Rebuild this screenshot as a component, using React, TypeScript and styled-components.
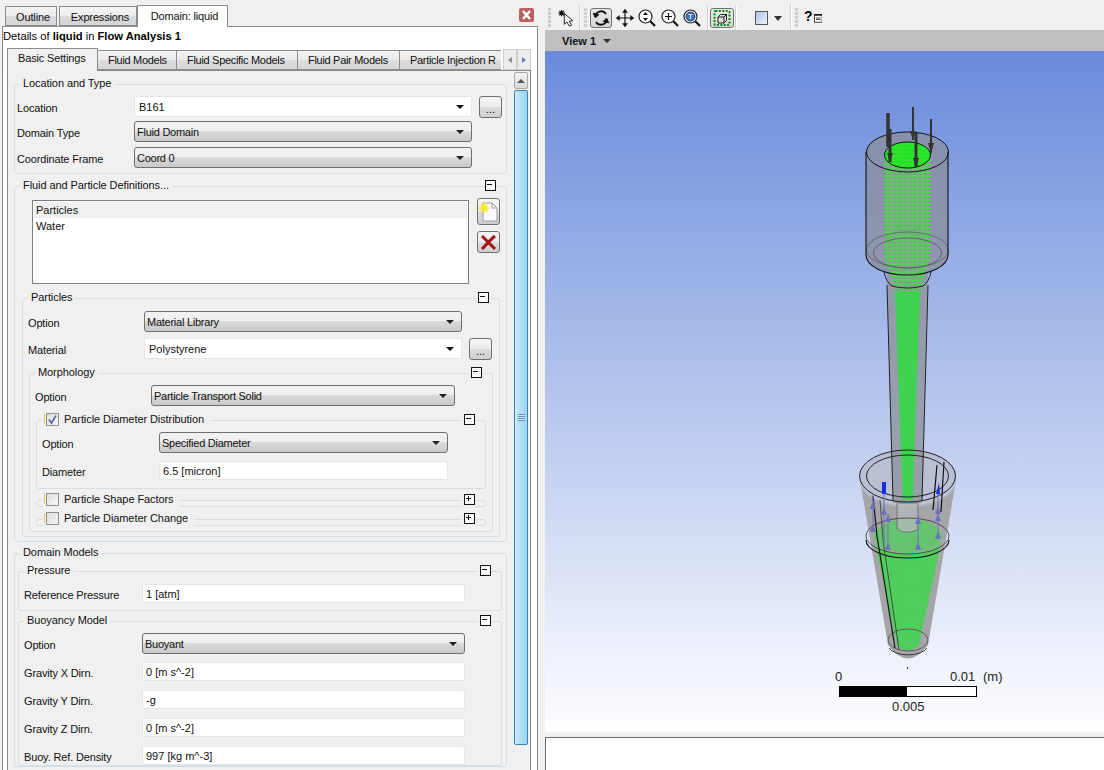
import React from "react";
import styled, { createGlobalStyle } from "styled-components";

const Global = createGlobalStyle`
  html, body { margin: 0; padding: 0; background: #f0f0f0; }
  body { font-family: "Liberation Sans", Arial, sans-serif; font-size: 11px; color: #000; }
  * { box-sizing: border-box; }
`;

const Root = styled.div`
  width: 1104px; height: 770px; display: flex; overflow: hidden; background: #f0f0f0;
`;
const LeftPane = styled.div`
  width: 545px; height: 100%; flex: none; display: flex; flex-direction: column; padding: 0 7px 0 2px;
`;
const TopTabs = styled.div`
  height: 26px; flex: none; display: flex; align-items: flex-end; padding-left: 3px; position: relative; z-index: 2;
`;
const TopTab = styled.div<{ $w: number; $active?: boolean; $gap?: number }>`
  width: ${p => p.$w}px;
  height: ${p => (p.$active ? 22 : 20)}px;
  margin-right: ${p => p.$gap ?? 0}px;
  margin-bottom: ${p => (p.$active ? -1 : 0)}px;
  padding: ${p => (p.$active ? "0 0 1px 4px" : "1px 0 0 4px")};
  border: 1px solid #8c8c8c;
  border-bottom: ${p => (p.$active ? "none" : "1px solid #8c8c8c")};
  background: ${p => (p.$active ? "#fff" : "linear-gradient(#f3f3f3 0, #ececec 50%, #dcdcdc 51%, #d4d4d4 100%)")};
  display: flex; align-items: center; justify-content: center; color: #111; letter-spacing: -0.15px;
`;
const CloseBtn = styled.div`
  width: 15px; height: 14px; margin: 0 4px 4px auto; border-radius: 2px; background: #bb5f5f;
  display: flex; align-items: center; justify-content: center;
`;
const Frame = styled.div`
  flex: 1; min-height: 0; border: 1px solid #8a8a8a; border-bottom: none; background: #fff; display: flex; flex-direction: column;
`;
const DetailsTitle = styled.div`
  height: 21px; flex: none; padding: 2px 0 0; line-height: 14px; font-size: 11.2px;
  b { font-weight: 700; }
`;
const SubTabs = styled.div`
  height: 22px; flex: none; margin: 0 6px 0 4px; display: flex; align-items: flex-end; position: relative; z-index: 2;
`;
const SubTab = styled.div<{ $w: number; $active?: boolean; $open?: boolean }>`
  width: ${p => p.$w}px; flex: none; overflow: hidden; white-space: nowrap;
  height: ${p => (p.$active ? 23 : 20)}px;
  margin-bottom: ${p => (p.$active ? -1 : 0)}px;
  border: 1px solid #8c8c8c;
  border-left: ${p => (p.$active ? "1px solid #8c8c8c" : "none")};
  border-right: ${p => (p.$open ? "none" : "1px solid #8c8c8c")};
  border-bottom: ${p => (p.$active ? "none" : "1px solid #8c8c8c")};
  background: ${p => (p.$active ? "#f0f0f0" : "linear-gradient(#f2f2f2 0, #ebebeb 50%, #dddddd 51%, #d6d6d6 100%)")};
  padding-left: 10px;
  line-height: 18px; color: #111; letter-spacing: ${p => (p.$active ? -0.15 : -0.3)}px;
`;
const TabScroll = styled.div`
  flex: none; margin-left: 2px; display: flex; height: 21px;
`;
const TabScrollBtn = styled.div`
  width: 14px; height: 21px; border: 1px solid #cfcfcf; background: #ececec; display: flex; align-items: center; justify-content: center;
`;
const Tri = styled.span<{ $dir: "l" | "r"; $c: string }>`
  width: 0; height: 0; border-top: 3px solid transparent; border-bottom: 3px solid transparent;
  ${p => (p.$dir === "l" ? `border-right: 4px solid ${p.$c};` : `border-left: 4px solid ${p.$c};`)}
`;
const Body = styled.div`
  flex: 1; min-height: 0; margin: 0 6px 0 4px; border: 1px solid #8a8a8a; border-bottom: none; background: #f0f0f0; display: flex; overflow: hidden;
`;
const Content = styled.div`
  width: 505px; flex: none; padding: 13px 6px 0;
`;
const Scrollbar = styled.div`
  width: 17px; flex: none; padding: 1px 2px 0 1px; display: flex; flex-direction: column;
`;
const ScrollUp = styled.div`
  height: 17px; border: 1px solid #a8a8a8; border-radius: 2px; background: linear-gradient(#f4f4f4, #d8d8d8);
  display: flex; align-items: center; justify-content: center;
  &::before { content: ""; border-left: 4px solid transparent; border-right: 4px solid transparent; border-bottom: 4px solid #555; }
`;
const Thumb = styled.div`
  height: 655px; margin-top: 1px; border: 1px solid #3c7fb1; border-radius: 2px;
  background: linear-gradient(90deg, #cfeafb 0, #b5e0f8 40%, #9dd4f3 100%);
  display: flex; align-items: center; justify-content: center;
`;
const Grip = styled.div`
  width: 7px; height: 7px;
  background: repeating-linear-gradient(#5b93bd 0 1px, #cde9fa 1px 2px);
`;

const Group = styled.div<{ $ml?: number; $mr?: number; $mt?: number; $pb?: number }>`
  margin: ${p => p.$mt ?? 0}px ${p => p.$mr ?? 0}px 0 ${p => p.$ml ?? 0}px;
  padding-bottom: ${p => p.$pb ?? 0}px;
  border: 1px solid #d5dfe5; border-radius: 3px;
`;
const GroupHead = styled.div<{ $pt?: number; $collapsed?: boolean }>`
  height: 14px; margin-top: -8px; margin-bottom: ${p => (p.$collapsed ? -1 : p.$pt ?? 5)}px;
  display: flex; align-items: center; justify-content: space-between; padding: 0 10px 0 5px;
`;
const Legend = styled.div`
  background: #f0f0f0; padding: 0 3px 2px; display: flex; align-items: center; height: 14px; line-height: 12px;
  color: #111; font-size: 11px; white-space: nowrap; letter-spacing: -0.08px;
`;
const CheckLegend = styled(Legend)`
  margin-left: 1px; padding: 0 6px 2px 1px;
`;
const Tick = styled.span`
  width: 1px; height: 10px; background: #f0c36d; margin-right: 1px;
`;
const CheckBox = styled.span`
  width: 13px; height: 13px; margin-right: 5px; border: 1px solid #8e8f8f; background: linear-gradient(135deg, #dedede, #f6f6f6);
  display: inline-flex; align-items: center; justify-content: center;
`;
const Toggle = styled.span`
  width: 13px; height: 13px; padding: 1px 2px 1px 0; background: #f0f0f0; display: block; position: relative;
  &::before { content: ""; display: block; width: 9px; height: 9px; margin: -1px 0 0 2px; border: 1px solid #111; background: #f8f8f8; }
  &::after { content: ""; position: absolute; left: 4px; top: 4px; width: 5px; height: 1px; background: #111; }
`;
const PlusBar = styled.span`
  position: absolute; left: 6px; top: 2px; width: 1px; height: 5px; background: #111;
`;
const Row = styled.div<{ $pad: number; $mt?: number }>`
  display: flex; align-items: center; height: 21px; padding-left: ${p => p.$pad}px; margin-top: ${p => p.$mt ?? 0}px;
`;
const Label = styled.div<{ $w: number }>`
  width: ${p => p.$w}px; flex: none; color: #111; padding-top: 3px; letter-spacing: -0.15px;
`;
const Select = styled.div<{ $w: number }>`
  width: ${p => p.$w}px; height: 21px; flex: none; border: 1px solid #6f6f6f; border-radius: 3px; padding: 0 0 0 2px;
  background: linear-gradient(#f2f2f2 0, #efefef 45%, #dcdcdc 46%, #c9c9c9 100%);
  display: flex; align-items: center; justify-content: space-between; color: #111; letter-spacing: -0.25px;
  &::after { content: ""; margin: 1px 7px 0 0; border-left: 4px solid transparent; border-right: 4px solid transparent; border-top: 4px solid #222; }
`;
const Combo = styled.div<{ $w: number }>`
  width: ${p => p.$w}px; height: 21px; flex: none; border: 1px solid #e6e6e6; border-radius: 2px; background: #fff; padding: 0 0 0 4px;
  display: flex; align-items: center; justify-content: space-between; color: #111;
  &::after { content: ""; margin: 0 7px 0 0; border-left: 4px solid transparent; border-right: 4px solid transparent; border-top: 4px solid #111; }
`;
const Input = styled.div<{ $w: number }>`
  width: ${p => p.$w}px; height: 19px; flex: none; border: 1px solid #e6e6e6; border-radius: 2px; background: #fff; padding: 0 0 0 3px;
  display: flex; align-items: center; color: #111;
`;
const InputRow = styled(Row)`
  height: 19px;
`;
const DotsBtn = styled.div`
  width: 23px; height: 22px; flex: none; margin-left: 7px; border: 1px solid #707070; border-radius: 3px;
  background: linear-gradient(#f4f4f4 0, #ececec 50%, #dcdcdc 51%, #cfcfcf 100%);
  display: flex; align-items: flex-end; justify-content: center; line-height: 14px; padding-bottom: 1px;
`;
const ListRow = styled.div`
  display: flex; align-items: flex-start; margin-left: 17px; height: 86px;
`;
const List = styled.div`
  width: 437px; height: 84px; flex: none; margin-top: 2px; border: 1px solid #7b7f85; background: #fff; padding: 1px;
`;
const ListItem = styled.div<{ $sel?: boolean }>`
  height: 16px; line-height: 16px; padding-left: 2px; color: #111; background: ${p => (p.$sel ? "#f0f0f0" : "transparent")};
`;
const SideBtns = styled.div`
  display: flex; flex-direction: column; gap: 6px; margin-left: 8px;
`;
const SideBtn = styled.div<{ $h: number }>`
  width: 23px; height: ${p => p.$h}px; border: 1px solid #707070; border-radius: 3px;
  background: linear-gradient(#f4f4f4 0, #ececec 50%, #dcdcdc 51%, #cfcfcf 100%);
  display: flex; align-items: center; justify-content: center;
`;
const RightPane = styled.div`
  flex: 1; min-width: 0; height: 100%; display: flex; flex-direction: column;
`;
const Toolbar = styled.div`
  height: 30px; flex: none; padding-top: 5px; display: flex; align-items: flex-start;
`;
const TGrip = styled.span<{ $ml: number }>`
  width: 3px; height: 19px; margin: 3px 0 0 ${p => p.$ml}px; flex: none;
  background: repeating-linear-gradient(#cfcfcf 0 3px, transparent 3px 4px);
`;
const TSep = styled.span<{ $ml: number }>`
  width: 2px; height: 25px; margin-left: ${p => p.$ml}px; flex: none; border-left: 1px solid #d0d0d0; border-right: 1px solid #fff;
`;
const ToolBtn = styled.div<{ $w: number; $ml?: number; $on?: boolean }>`
  width: ${p => p.$w}px; height: 20px; margin: 3px 0 0 ${p => p.$ml ?? 0}px; flex: none; border-radius: 3px;
  border: 1px solid ${p => (p.$on ? "#707070" : "transparent")};
  background: ${p => (p.$on ? "linear-gradient(#e9e9e9, #d6d6d6)" : "transparent")};
  display: flex; align-items: center; justify-content: center; gap: 6px;
`;
const HelpMark = styled.span`
  font-weight: 700; font-size: 14px; line-height: 14px; margin: -4px -5px 0 0;
`;
const ViewBar = styled.div`
  height: 21px; flex: none; background: #bfbfbf; padding-left: 17px; display: flex; align-items: center; gap: 7px; font-weight: 700; color: #101018;
  &::after { content: ""; margin-top: 1px; border-left: 4px solid transparent; border-right: 4px solid transparent; border-top: 4px solid #333; }
`;
const Viewport = styled.div`
  height: 681px; flex: none; background: linear-gradient(#6a8adb 0, #fefeff 100%);
`;
const ViewSvg = styled.svg`
  display: block; width: 100%; height: 100%;
`;
const BottomPanel = styled.div`
  flex: 1; margin-top: 5px; background: #fff; border-top: 1px solid #6f6f6f; border-left: 1px solid #6f6f6f;
`;

const Head: React.FC<{ title: string; pt?: number; none?: boolean }> = ({ title, pt, none }) => (
  <GroupHead $pt={pt}>
    <Legend>{title}</Legend>
    {!none && <Toggle />}
  </GroupHead>
);

const Check = ({ on }: { on?: boolean }) => (
  <CheckBox>
    {on && (
      <svg width="11" height="11" viewBox="0 0 11 11">
        <path d="M2 5.5 L4.5 9 L9 1.5" fill="none" stroke="#5a6fa8" strokeWidth="1.8" />
      </svg>
    )}
  </CheckBox>
);

const CheckHead: React.FC<{ title: string; on?: boolean; plus?: boolean; pt?: number; collapsed?: boolean }> = ({ title, on, plus, pt, collapsed }) => (
  <GroupHead $pt={pt} $collapsed={collapsed}>
    <CheckLegend>
      <Tick />
      <Check on={on} />
      {title}
    </CheckLegend>
    <Toggle>{plus && <PlusBar />}</Toggle>
  </GroupHead>
);

const Lens: React.FC<{ children?: React.ReactNode }> = ({ children }) => (
  <svg width="20" height="20" viewBox="0 0 20 20" fill="none">
    <circle cx="8.5" cy="8.5" r="6.5" stroke="#222" strokeWidth="1.2" fill="#fff" />
    <path d="M13.3 13.3 L18 18" stroke="#111" strokeWidth="2.2" />
    {children}
  </svg>
);

const Scene = () => {
  const arrows: [number, number, number, number[]][] = [
    [873, 495, 530, [505, 528]],
    [884, 490, 545, [511]],
    [888, 515, 549, [518, 546]],
    [918, 515, 549, [520, 546]],
    [938, 490, 535, [510, 517, 535]],
  ];
  return (
    <ViewSvg viewBox="545 51 559 681" preserveAspectRatio="none">
      <defs>
        <pattern id="mesh" width="5" height="4" patternUnits="userSpaceOnUse">
          <path d="M0 0 L2.5 1 L5 0 M2.5 1 L2.5 3 L0 4 M2.5 3 L5 4" fill="none" stroke="#3fe23f" strokeWidth="1" />
        </pattern>
        <pattern id="dots" width="3" height="3" patternUnits="userSpaceOnUse">
          <rect width="3" height="3" fill="#4ad058" />
          <rect x="1" y="1" width="1" height="1" fill="#74bb7c" />
        </pattern>
      </defs>
      {/* lower cone, behind the tube */}
      <path d="M860 480 L888 645 Q908 672 928 645 L956 480 A48 26 0 0 1 860 480Z" fill="#a5a5a8" />
      <path d="M860 476 A48 26 0 0 1 956 476 L956 482 A48 26 0 0 1 860 482Z" fill="#b0b4c2" fillOpacity="0.6" />
      {/* upper body */}
      <path d="M866 152 L866 255 A41 20 0 0 0 948 255 L948 152 A41 19 0 0 0 866 152Z" fill="#8a8d99" fillOpacity="0.72" />
      <path d="M887 272 L893 503 L922 503 L928 272Z" fill="#8f939e" fillOpacity="0.8" />
      <path d="M884 155 L884 258 Q890 270 896 296 L920 296 Q925 270 931 258 L931 155Z" fill="#8f939e" />
      <path d="M884 155 L884 258 Q890 270 896 296 L920 296 Q925 270 931 258 L931 155Z" fill="url(#mesh)" />
      <path d="M895 292 L900 430 L903 500 L913 500 L915 430 L920 292Z" fill="#3fd24f" />
      <ellipse cx="907.5" cy="155" rx="23" ry="13" fill="#1ee31e" />
      <ellipse cx="907.5" cy="155" rx="23" ry="13" fill="url(#mesh)" opacity="0.7" />
      <ellipse cx="907.5" cy="155" rx="23" ry="13" fill="none" stroke="#111" strokeWidth="1" />
      <ellipse cx="907.5" cy="152" rx="41" ry="20" fill="none" stroke="#111" strokeWidth="1" />
      <ellipse cx="907.5" cy="250" rx="41" ry="18" fill="none" stroke="#5d5f66" strokeWidth="0.8" />
      <ellipse cx="907.5" cy="253" rx="34" ry="15" fill="none" stroke="#55575e" strokeWidth="0.8" />
      <path d="M866 152 L866 255 A41 20 0 0 0 948 255 L948 152" fill="none" stroke="#111" strokeWidth="1.1" />
      <path d="M884 272 Q886 282 892 286 A22 7 0 0 0 923 286 Q929 282 931 272" fill="none" stroke="#222" strokeWidth="1" />
      <path d="M887 285 L893 500 M928 285 L922 500" stroke="#222" strokeWidth="1" />
      {/* top arrows */}
      <g stroke="#333" fill="none">
        <path d="M888 113 L888 147" strokeWidth="3.5" />
        <path d="M890 129 L890 162" strokeWidth="3" />
        <path d="M913 107 L913 140" strokeWidth="2" />
        <path d="M916 133 L916 167" strokeWidth="3" />
        <path d="M931 119 L931 153" strokeWidth="2" />
      </g>
      <g fill="#333">
        <path d="M910 131 L916 131 L913 140Z" />
        <path d="M913 158 L919 158 L916 168Z" />
        <path d="M928 143 L934 143 L931 154Z" />
        <path d="M887 153 L893 153 L890 163Z" />
      </g>
      {/* green cone and inner pipe */}
      <path d="M875 542 L897 645 Q908 656 919 645 L942 538 A34 16 0 0 1 875 542Z" fill="url(#dots)" />
      <ellipse cx="908" cy="536" rx="34" ry="17" fill="url(#dots)" opacity="0.75" />
      <path d="M897 503 L897 528 A11 6 0 0 0 918 528 L918 503Z" fill="#b3b6ba" fillOpacity="0.8" stroke="#666" strokeWidth="0.8" />
      <ellipse cx="907.5" cy="476" rx="48" ry="26" fill="none" stroke="#222" strokeWidth="1" />
      <ellipse cx="907.5" cy="476" rx="41" ry="21" fill="none" stroke="#222" strokeWidth="1" />
      <ellipse cx="907.5" cy="536" rx="41.5" ry="18" fill="none" stroke="#444" strokeWidth="0.9" />
      <path d="M866 540 A41.5 18 0 0 0 949 540" fill="none" stroke="#111" strokeWidth="1.1" />
      <ellipse cx="908" cy="640" rx="20" ry="11" fill="none" stroke="#555" strokeWidth="0.9" />
      <path d="M889 648 A20 10 0 0 0 927 648" fill="none" stroke="#333" strokeWidth="1" />
      <g stroke="#111" fill="none" strokeWidth="1.2">
        <path d="M873 496 L877 536 L895 648" />
        <path d="M880 500 L883 540 L899 650" strokeWidth="0.8" stroke="#333" />
        <path d="M937 465 L933 510" />
        <path d="M944 462 L941 512" />
      </g>
      {arrows.map(([x, a, b, heads]) => (
        <g key={x}>
          <path d={`M${x} ${a} L${x} ${b}`} stroke="#6d72bd" strokeWidth="1" />
          {heads.map(h => (
            <path key={h} d={`M${x - 3} ${h + 4} L${x + 3} ${h + 4} L${x} ${h - 4}Z`} fill="#6d72bd" />
          ))}
        </g>
      ))}
      <rect x="882" y="482" width="4" height="12" fill="#1c2ce0" />
      <path d="M936 494 L940 494 L939 483Z" fill="#1c2ce0" />
      <rect x="907" y="667" width="1" height="2" fill="#333" />
      {/* scale */}
      <rect x="839.5" y="686.5" width="137" height="10" fill="#fff" stroke="#000" />
      <rect x="839" y="686" width="68" height="11" fill="#000" />
      <g fontFamily="'Liberation Sans', Arial, sans-serif" fontSize="13" fill="#222">
        <text x="835" y="681">0</text>
        <text x="950" y="681">0.01</text>
        <text x="983" y="681">(m)</text>
        <text x="892" y="711">0.005</text>
      </g>
    </ViewSvg>
  );
};

export default function App() {
  return (
    <Root>
      <Global />
      <LeftPane>
        <TopTabs>
          <TopTab $w={52} $gap={2}>Outline</TopTab>
          <TopTab $w={78}>Expressions</TopTab>
          <TopTab $w={91} $active>Domain: liquid</TopTab>
          <CloseBtn>
            <svg width="11" height="10" viewBox="0 0 11 10">
              <path d="M2 1 L9 9 M9 1 L2 9" stroke="#fff" strokeWidth="2.4" />
            </svg>
          </CloseBtn>
        </TopTabs>
        <Frame>
          <DetailsTitle>Details of <b>liquid</b> in <b>Flow Analysis 1</b></DetailsTitle>
          <SubTabs>
            <SubTab $w={91} $active>Basic Settings</SubTab>
            <SubTab $w={79}>Fluid Models</SubTab>
            <SubTab $w={121}>Fluid Specific Models</SubTab>
            <SubTab $w={102}>Fluid Pair Models</SubTab>
            <SubTab $w={101} $open>Particle Injection R</SubTab>
            <TabScroll>
              <TabScrollBtn><Tri $dir="l" $c="#8a8a8a" /></TabScrollBtn>
              <TabScrollBtn><Tri $dir="r" $c="#5f78c8" /></TabScrollBtn>
            </TabScroll>
          </SubTabs>
          <Body>
            <Content>
              <Group $pb={5}>
                <Head title="Location and Type" none />
                <Row $pad={2}>
                  <Label $w={117}>Location</Label>
                  <Combo $w={338}>B161</Combo>
                  <DotsBtn>...</DotsBtn>
                </Row>
                <Row $pad={2} $mt={4}>
                  <Label $w={117}>Domain Type</Label>
                  <Select $w={338}>Fluid Domain</Select>
                </Row>
                <Row $pad={2} $mt={5}>
                  <Label $w={117}>Coordinate Frame</Label>
                  <Select $w={338}>Coord 0</Select>
                </Row>
              </Group>

              <Group $mt={12} $pb={4}>
                <Head title="Fluid and Particle Definitions..." />
                <ListRow>
                  <List>
                    <ListItem $sel>Particles</ListItem>
                    <ListItem>Water</ListItem>
                  </List>
                  <SideBtns>
                    <SideBtn $h={27}>
                      <svg width="21" height="23" viewBox="0 0 21 23">
                        <path d="M5 3 L14 3 L19 8 L19 21 L5 21Z" fill="#fbfbff" stroke="#9a9a9a" />
                        <path d="M14 3 L14 8 L19 8" fill="none" stroke="#9a9a9a" />
                        <circle cx="6" cy="8" r="3.4" fill="#f7ef3a" />
                        <path d="M6 2 V14 M0 8 H12 M2 4 L10 12 M10 4 L2 12" stroke="#f2e22a" strokeWidth="1" />
                      </svg>
                    </SideBtn>
                    <SideBtn $h={22}>
                      <svg width="17" height="17" viewBox="0 0 17 17">
                        <path d="M2 2 C6 6 11 11 15 15 M15 2 C10 6 6 11 2 15" fill="none" stroke="#a31417" strokeWidth="3" />
                      </svg>
                    </SideBtn>
                  </SideBtns>
                </ListRow>

                <Group $ml={7} $mr={6} $mt={14} $pb={4}>
                  <Head title="Particles" pt={6} />
                  <Row $pad={5}>
                    <Label $w={116}>Option</Label>
                    <Select $w={318}>Material Library</Select>
                  </Row>
                  <Row $pad={5} $mt={6}>
                    <Label $w={116}>Material</Label>
                    <Combo $w={318}>Polystyrene</Combo>
                    <DotsBtn>...</DotsBtn>
                  </Row>

                  <Group $ml={6} $mr={6} $mt={14} $pb={5}>
                    <Head title="Morphology" pt={5} />
                    <Row $pad={5}>
                      <Label $w={116}>Option</Label>
                      <Select $w={304}>Particle Transport Solid</Select>
                    </Row>
                    <Group $ml={6} $mr={6} $mt={14} $pb={8}>
                      <CheckHead title="Particle Diameter Distribution" on pt={5} />
                      <Row $pad={5}>
                        <Label $w={117}>Option</Label>
                        <Select $w={289}>Specified Diameter</Select>
                      </Row>
                      <InputRow $pad={5} $mt={8}>
                        <Label $w={117}>Diameter</Label>
                        <Input $w={289}>6.5 [micron]</Input>
                      </InputRow>
                    </Group>
                    <Group $ml={6} $mr={6} $mt={11}>
                      <CheckHead title="Particle Shape Factors" plus collapsed />
                    </Group>
                    <Group $ml={6} $mr={6} $mt={12}>
                      <CheckHead title="Particle Diameter Change" plus collapsed />
                    </Group>
                  </Group>
                </Group>
              </Group>

              <Group $mt={11}>
                <Head title="Domain Models" none pt={0} />
                <Group $ml={3} $mr={4} $mt={11} $pb={7}>
                  <Head title="Pressure" pt={6} />
                  <InputRow $pad={5}>
                    <Label $w={118}>Reference Pressure</Label>
                    <Input $w={323}>1 [atm]</Input>
                  </InputRow>
                </Group>
                <Group $ml={3} $mr={4} $mt={10}>
                  <Head title="Buoyancy Model" pt={5} />
                  <Row $pad={5}>
                    <Label $w={118}>Option</Label>
                    <Select $w={323}>Buoyant</Select>
                  </Row>
                  <InputRow $pad={5} $mt={8}>
                    <Label $w={118}>Gravity X Dirn.</Label>
                    <Input $w={323}>0 [m s^-2]</Input>
                  </InputRow>
                  <InputRow $pad={5} $mt={9}>
                    <Label $w={118}>Gravity Y Dirn.</Label>
                    <Input $w={323}>-g</Input>
                  </InputRow>
                  <InputRow $pad={5} $mt={9}>
                    <Label $w={118}>Gravity Z Dirn.</Label>
                    <Input $w={323}>0 [m s^-2]</Input>
                  </InputRow>
                  <InputRow $pad={5} $mt={9}>
                    <Label $w={118}>Buoy. Ref. Density</Label>
                    <Input $w={323}>997 [kg m^-3]</Input>
                  </InputRow>
                </Group>
              </Group>
            </Content>
            <Scrollbar>
              <ScrollUp />
              <Thumb><Grip /></Thumb>
            </Scrollbar>
          </Body>
        </Frame>
      </LeftPane>

      <RightPane>
        <Toolbar>
          <TGrip $ml={3} />
          <ToolBtn $w={20} $ml={6}>
            <svg width="20" height="20" viewBox="0 0 20 20" fill="none">
              <path d="M7 5 L7 17 L10 14.5 L12.5 19 L15 18 L12.5 13.5 L16.5 13Z" fill="#fff" stroke="#111" />
              <path d="M4 1 V8 M0.5 4.5 H7.5 M1.5 2 L6.5 7 M6.5 2 L1.5 7" stroke="#111" strokeWidth="1.3" />
            </svg>
          </ToolBtn>
          <TSep $ml={2} />
          <TGrip $ml={3} />
          <ToolBtn $w={22} $ml={3} $on>
            <svg width="18" height="18" viewBox="0 0 18 18" fill="none" stroke="#111" strokeWidth="1.8">
              <path d="M3 8 A6 6 0 0 1 14 5" />
              <path d="M15 10 A6 6 0 0 1 4 13" />
              <path d="M1 4 L3.5 9 L7 5.5Z" fill="#111" strokeWidth="0.6" />
              <path d="M17 14 L14.5 9 L11 12.5Z" fill="#111" strokeWidth="0.6" />
            </svg>
          </ToolBtn>
          <ToolBtn $w={22} $ml={2}>
            <svg width="20" height="20" viewBox="0 0 20 20" fill="none" stroke="#111" strokeWidth="1.2">
              <path d="M10 3 V17 M3 10 H17" />
              <path d="M10 1 L7.5 4.5 H12.5Z M10 19 L7.5 15.5 H12.5Z M1 10 L4.5 7.5 V12.5Z M19 10 L15.5 7.5 V12.5Z" fill="#111" strokeWidth="0.4" />
            </svg>
          </ToolBtn>
          <ToolBtn $w={22}>
            <Lens><path d="M8.5 4 L6 7 H11Z M8.5 13 L6 10 H11Z" fill="#111" /></Lens>
          </ToolBtn>
          <ToolBtn $w={22} $ml={1}>
            <Lens><path d="M8.5 5 V12 M5 8.5 H12" stroke="#111" strokeWidth="1.2" /></Lens>
          </ToolBtn>
          <ToolBtn $w={22}>
            <Lens><circle cx="8.5" cy="8.5" r="4.5" fill="#3f78d8" stroke="#111" strokeWidth="0.8" /><path d="M6.5 6.5 H10.5 M8.5 6.5 V11" stroke="#cfe0ff" strokeWidth="1" /></Lens>
          </ToolBtn>
          <TSep $ml={4} />
          <ToolBtn $w={24} $ml={1} $on>
            <svg width="20" height="18" viewBox="0 0 20 18" fill="none">
              <rect x="2.5" y="2" width="15" height="14" rx="1" stroke="#0d8a0d" strokeWidth="2" strokeDasharray="2 1.4" />
              <path d="M6 8 H12 V14 H6Z M6 8 L8.5 5.5 H14.5 V11.5 L12 14 M12 8 L14.5 5.5" stroke="#222" strokeWidth="1" />
            </svg>
          </ToolBtn>
          <TSep $ml={1} />
          <ToolBtn $w={36} $ml={13}>
            <svg width="13" height="14" viewBox="0 0 13 14">
              <defs>
                <linearGradient id="sw" x1="0" y1="0" x2="1" y2="1">
                  <stop offset="0" stopColor="#a9bfee" />
                  <stop offset="1" stopColor="#f2f5fd" />
                </linearGradient>
              </defs>
              <rect x="0.5" y="0.5" width="12" height="13" fill="url(#sw)" stroke="#555" />
            </svg>
            <svg width="8" height="5" viewBox="0 0 8 5"><path d="M0 0 H8 L4 5Z" fill="#333" /></svg>
          </ToolBtn>
          <TSep $ml={4} />
          <TGrip $ml={3} />
          <ToolBtn $w={20} $ml={5}>
            <HelpMark>?</HelpMark>
            <svg width="11" height="12" viewBox="0 0 11 12" fill="none" stroke="#111">
              <rect x="0.5" y="1.5" width="10" height="10" fill="#fff" />
              <path d="M0.5 2 H10.5" strokeWidth="2" />
              <path d="M2.5 6 H8.5 M2.5 8 H8.5" />
            </svg>
          </ToolBtn>
        </Toolbar>
        <ViewBar>View 1</ViewBar>
        <Viewport><Scene /></Viewport>
        <BottomPanel />
      </RightPane>
    </Root>
  );
}
